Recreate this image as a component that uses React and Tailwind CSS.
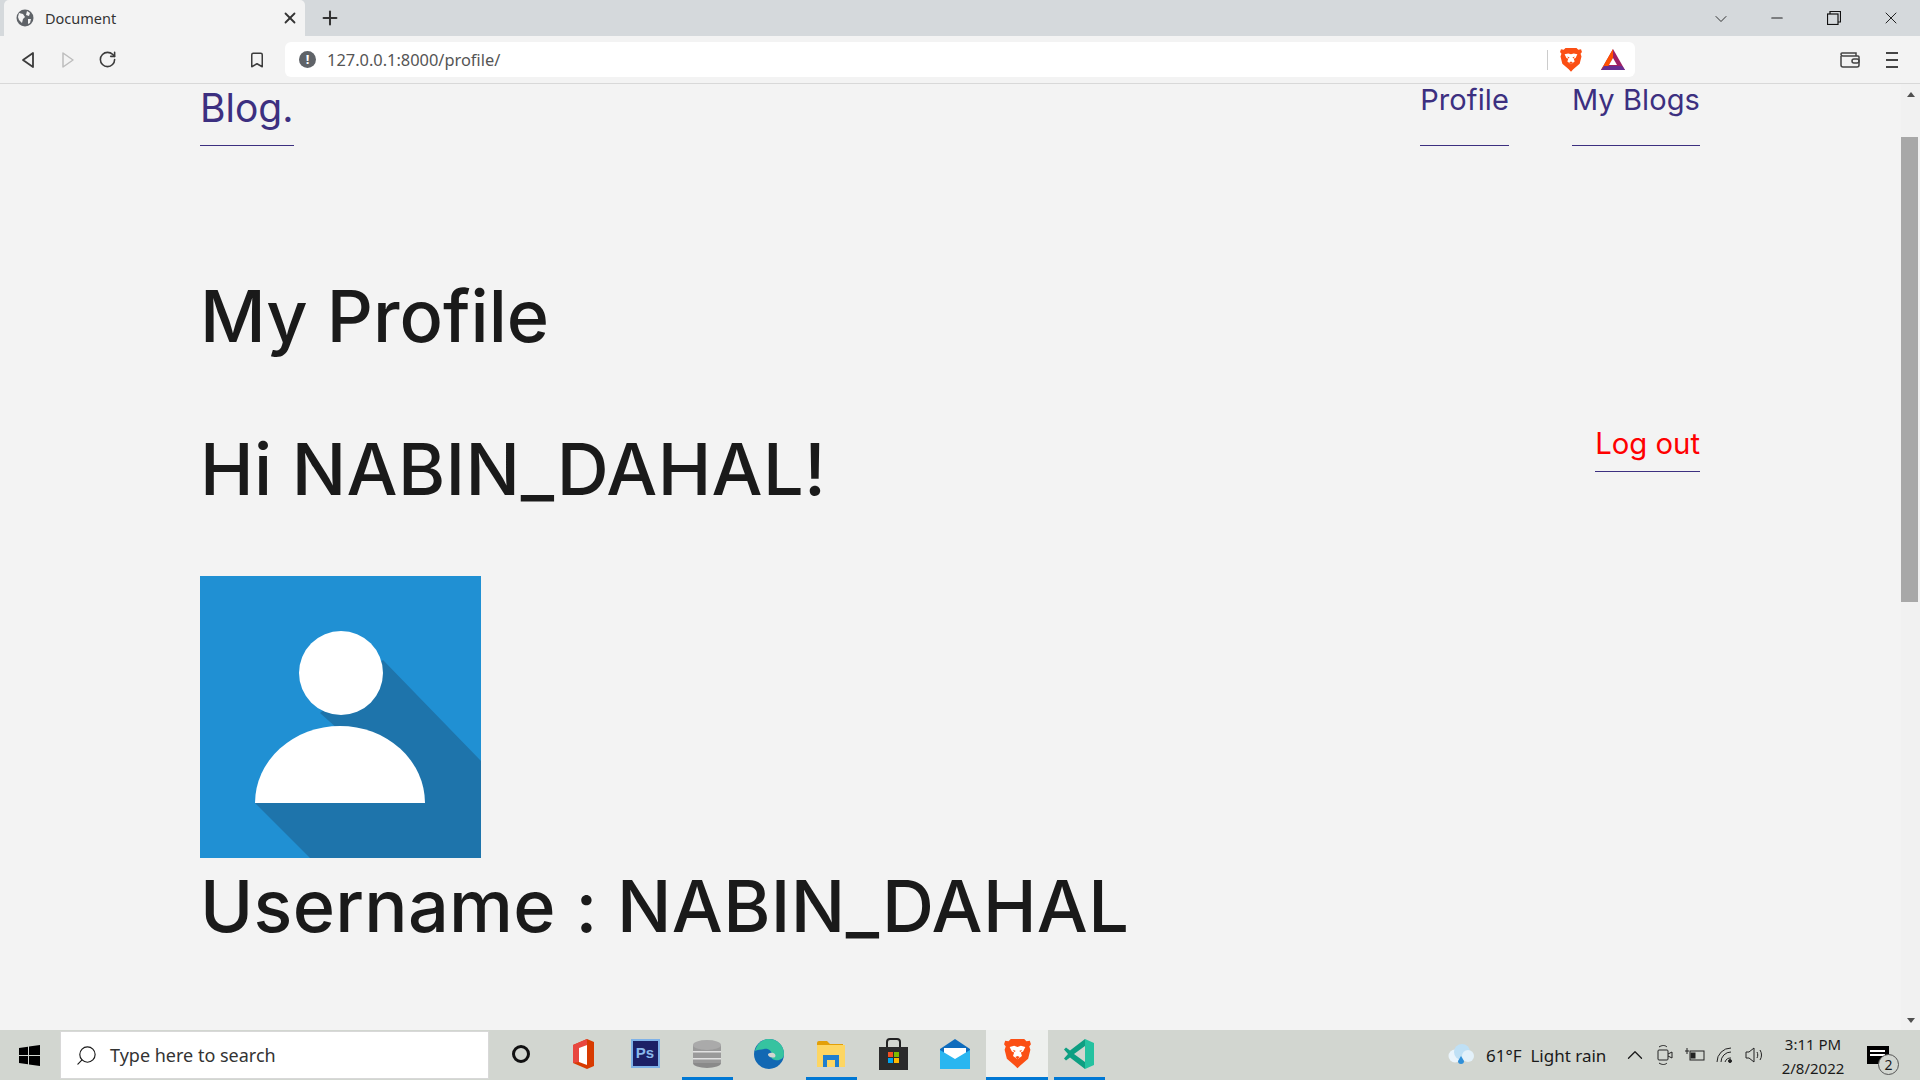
import { Bookmark, ChevronDown, ChevronUp, Minus, Plus, RotateCw, Search, X } from 'lucide-react'

const ui = { fontFamily: '"Noto Sans", "Open Sans", sans-serif' }
const dm = { fontFamily: 'Inter, "Noto Sans", sans-serif' }

function BraveLogo({ size = 24 }) {
  return (
    <svg width={size} height={size * 1.12} viewBox="0 0 24 27">
      <path d="M6 1h12l2 2 3-.5 1 3-1.500 2 1 3-2 8-7 6L12 27l-2.500-2.500-7-6-2-8 1-3L0 5.500l1-3 3 .5z" fill="#fb4f14" />
      <path d="M5 8l4-1 3 1 3-1 4 1-2 4-2 1 1 3-4 3-4-3 1-3-2-1z" fill="#fff" />
      <path d="M8 10.500l2.500 1-1.500 1zM16 10.500l-2.500 1 1.500 1zM10 17l2-1 2 1-2 2z" fill="#fb4f14" />
    </svg>
  )
}

function BatLogo() {
  return (
    <svg width="24" height="22" viewBox="0 0 24 22">
      <path d="M12 0l12 21H0z" fill="#9e1f63" />
      <path d="M12 0L0 21h5L12 9z" fill="#ff5000" />
      <path d="M0 21h24l-3-4H3z" fill="#662d91" />
      <path d="M12 9l4 7H8z" fill="#fff" />
    </svg>
  )
}

function TabStrip() {
  return (
    <div className="h-[36px] bg-[#d5d9dc] flex items-end pl-[4px] text-[#333]">
      <div className="w-[301px] h-[36px] bg-[#f3f3f3] rounded-t-[5px] flex items-center pl-[12px] pr-[6px]">
        <svg width="18" height="18" viewBox="0 0 18 18">
          <circle cx="9" cy="9" r="8.500" fill="#5f6368" />
          <path d="M3 4l4 1 2 3-2 2-1 4-3-3-1-3zM11 2l3 2-1 3-3-1zM12 10l3 0-1 4-2 1z" fill="#f3f3f3" />
        </svg>
        <span className="ml-[11px] mt-[1px] text-[14.500px] text-[#333]" style={ui}>Document</span>
        <X className="ml-auto" size={18} strokeWidth={2.400} />
      </div>
      <div className="w-[50px] h-[36px] flex items-center justify-center">
        <Plus size={22} strokeWidth={2.200} />
      </div>
      <div className="ml-auto h-[36px] flex items-center text-[#222]">
        <ChevronDown size={20} strokeWidth={1.100} className="mt-[2px]" />
        <div className="w-[57px] ml-[17px] flex justify-center"><Minus size={18} strokeWidth={1.400} /></div>
        <div className="w-[57px] flex justify-center">
          <svg width="14" height="14" viewBox="0 0 14 14" fill="none" stroke="#111" strokeWidth="1.200">
            <rect x="0.500" y="3" width="10.500" height="10.500" />
            <path d="M3 3V0.500h10.500V11H11" />
          </svg>
        </div>
        <div className="w-[57px] mr-[1px] flex justify-center"><X size={20} strokeWidth={1.200} /></div>
      </div>
    </div>
  )
}

function Toolbar() {
  return (
    <div className="h-[48px] bg-[#f3f3f3] border-b border-[#d8d8d8] flex items-center text-[#3b3b3b]">
      <div className="w-[285px] h-full flex items-center pl-[21px]">
        <svg width="14" height="18" viewBox="0 0 14 18" fill="none" stroke="#3b3b3b" strokeWidth="1.800"><path d="M12 2v14L2 9z" strokeLinejoin="round" /></svg>
        <svg className="ml-[26px]" width="14" height="18" viewBox="0 0 14 18" fill="none" stroke="#bdbdbd" strokeWidth="1.500"><path d="M2 2v14l10-7z" strokeLinejoin="round" /></svg>
        <RotateCw className="ml-[23px]" size={19} strokeWidth={2} />
        <Bookmark className="ml-[131px]" size={18} strokeWidth={2} />
      </div>
      <div className="w-[1350px] h-[35px] bg-white rounded-[6px] flex items-center pl-[14px]">
        <div className="w-[17px] h-[17px] rounded-full bg-[#5f6368] text-white text-[13px] font-bold leading-[17px] text-center" style={ui}>!</div>
        <span className="ml-[11px] mt-[1px] text-[16.400px] text-[#555]" style={ui}>127.0.0.1:8000/profile/</span>
        <div className="ml-auto w-[1px] h-[20px] bg-[#ccc]" />
        <div className="ml-[12px]"><BraveLogo size={22} /></div>
        <div className="ml-[19px] mr-[10px]"><BatLogo /></div>
      </div>
      <svg className="ml-[205px]" width="20" height="16" viewBox="0 0 20 16" fill="none" stroke="#444" strokeWidth="1.500">
        <path d="M1 4V13a2 2 0 002 2h14a2 2 0 002-2V5a1 1 0 00-1-1H3a2 2 0 01-2-2 1 1 0 011-1h14v3" />
        <rect x="12" y="7" width="7" height="4" rx="2" />
      </svg>
      <div className="ml-[26px] flex flex-col gap-[5px]">
        <div className="w-[12px] h-[2px] bg-[#444]" />
        <div className="w-[12px] h-[2px] bg-[#444]" />
        <div className="w-[12px] h-[2px] bg-[#444]" />
      </div>
    </div>
  )
}

function Avatar() {
  return (
    <svg width="281" height="282" viewBox="0 0 281 282" className="block">
      <rect width="281" height="282" fill="#2090d3" />
      <path d="M120 137L183 84L281 185V282H110L55 227H221z" fill="#1e74ab" />
      <circle cx="141" cy="97" r="42" fill="#fff" />
      <path d="M55 227A85 77 0 01225 227z" fill="#fff" />
    </svg>
  )
}

function NavLink({ children }) {
  return (
    <a className="h-[62px] block border-b border-[#3c2f80] text-[#3c2f80] text-[29px] tracking-[0.1px] leading-[32px]">{children}</a>
  )
}

function Scrollbar() {
  return (
    <div className="w-[19px] bg-[#f1f1f1] flex flex-col items-center">
      <div className="h-[53px] pt-[8px]"><div className="w-0 h-0 border-x-[4px] border-x-transparent border-b-[5px] border-b-[#505050]" /></div>
      <div className="w-[17px] h-[465px] bg-[#a8a8a8] mr-[2px]" />
      <div className="mt-auto h-[12px]"><div className="w-0 h-0 border-x-[4px] border-x-transparent border-t-[5px] border-t-[#505050]" /></div>
    </div>
  )
}

function Cell({ w = 'w-[62px]', bar, active, children }) {
  return (
    <div className={`${w} h-full flex flex-col items-center ${active ? 'bg-[#eef0ee]' : ''}`}>
      <div className="flex-1 flex items-center justify-center">{children}</div>
      <div className={`h-[3px] ${active ? 'w-full' : 'w-[51px]'} ${bar ? 'bg-[#0078d4]' : ''}`} />
    </div>
  )
}

function Tray({ children }) {
  return <div className="w-[30px] flex justify-center">{children}</div>
}

function Taskbar() {
  return (
    <div className="h-[50px] bg-[#d2d6d0] flex items-center text-[#1a1a1a]" style={ui}>
      <div className="w-[60px] flex justify-center pr-[1px]">
        <svg width="21" height="21" viewBox="0 0 21 21" fill="#000">
          <path d="M0 3l9-1.300V10H0zM10 1.500L21 0v10H10zM0 11h9v8.300L0 18zM10 11h11v10L10 19.500z" />
        </svg>
      </div>
      <div className="w-[429px] h-[48px] bg-white flex items-center pl-[14px] border border-[#d8d8d8]">
        <Search size={23} strokeWidth={1.200} className="-scale-x-100" />
        <span className="ml-[12px] text-[18px] text-[#333]">Type here to search</span>
      </div>
      <div className="h-full flex items-center">
        <Cell w="w-[63px]">
          <div className="w-[18px] h-[18px] rounded-full border-[3px] border-[#111]" />
        </Cell>
        <Cell>
          <svg width="22" height="30" viewBox="0 0 22 30">
            <path d="M1 6L15 0l7 3v24l-7 3L1 24z" fill="#d83b01" />
            <path d="M1 6L15 0v6L7 9v14l-6 1z" fill="#e8473f" />
            <path d="M7 9l8-3v20l-8-3z" fill="#fff" />
          </svg>
        </Cell>
        <Cell>
          <div className="w-[29px] h-[29px] bg-[#1c2066] border-[2px] border-[#7fb2e8] text-[#8ab8ec] text-[15px] font-bold flex items-center justify-center" style={{ fontFamily: 'Liberation Sans, sans-serif' }}>Ps</div>
        </Cell>
        <Cell bar>
          <svg width="30" height="30" viewBox="0 0 30 30">
            <ellipse cx="15" cy="24" rx="14" ry="5" fill="#8a8a8a" />
            <rect x="1" y="6" width="28" height="18" fill="#9a9a9a" />
            <rect x="1" y="12" width="28" height="1.500" fill="#e2e2e2" />
            <rect x="1" y="19" width="28" height="1.500" fill="#e2e2e2" />
            <ellipse cx="15" cy="6" rx="14" ry="5" fill="#aaa" />
          </svg>
        </Cell>
        <Cell>
          <svg width="30" height="30" viewBox="0 0 30 30">
            <circle cx="15" cy="15" r="15" fill="#1268b3" />
            <path d="M1 12C3 4 9 0 15 0c9 0 15 7 15 15 0 5-5 7-9 6-4-1-4-3-3-5 0-4-4-7-8-6-3 .5-7 1-9 2z" fill="#36c3a0" />
            <path d="M14 15c4-3 9 0 7 3-1 1-7 1-7-3z" fill="#d2d6d0" />
          </svg>
        </Cell>
        <Cell bar>
          <svg width="28" height="26" viewBox="0 0 28 26">
            <path d="M0 2a2 2 0 012-2h8l3 3h13v4H0z" fill="#e3a008" />
            <path d="M0 4h28v22H0z" fill="#fdd663" />
            <path d="M6 14h16v12h-4v-7h-8v7H6z" fill="#1f7fcf" />
          </svg>
        </Cell>
        <Cell>
          <svg width="29" height="32" viewBox="0 0 29 32">
            <path d="M8 9V4a3 3 0 013-3h7a3 3 0 013 3v5" fill="none" stroke="#222" strokeWidth="2" />
            <rect y="9" width="29" height="23" fill="#2b2b2b" />
            <rect x="9" y="14" width="5" height="5" fill="#f25022" />
            <rect x="15" y="14" width="5" height="5" fill="#7fba00" />
            <rect x="9" y="20" width="5" height="5" fill="#00a4ef" />
            <rect x="15" y="20" width="5" height="5" fill="#ffb900" />
          </svg>
        </Cell>
        <Cell>
          <svg width="30" height="30" viewBox="0 0 30 30">
            <path d="M15 0l15 10v20H0V10z" fill="#0f6cbd" />
            <path d="M4 9h22v6l-11 6L4 15z" fill="#fff" />
            <path d="M0 11l15 9 15-9v19H0z" fill="#29b6f0" />
          </svg>
        </Cell>
        <Cell active bar><BraveLogo size={27} /></Cell>
        <Cell bar>
          <svg width="30" height="30" viewBox="0 0 30 30" fill="#1fb89a">
            <path d="M21 0l9 4v22l-9 4z" fill="#25c2a0" />
            <path d="M21 0v7L10 15l11 8v7L6 18.500l-4 3-2-2 4-4.500-4-4.500 2-2 4 3z" fill="#0e9f82" />
          </svg>
        </Cell>
      </div>
      <div className="ml-auto flex items-center h-full">
        <svg width="26" height="22" viewBox="0 0 26 22">
          <circle cx="7" cy="12" r="6.500" fill="#eaf4fb" />
          <circle cx="14" cy="8" r="8" fill="#bfe0f5" />
          <circle cx="20" cy="12" r="6" fill="#e3f1fa" />
          <path d="M13 12l3 5a3 3 0 11-6 0z" fill="#2f8fd8" />
        </svg>
        <span className="ml-[12px] w-[134px] mt-[2px] text-[17px]">61°F&nbsp; Light rain</span>
        <Tray><ChevronUp size={26} strokeWidth={1.200} /></Tray>
        <Tray>
          <svg width="16" height="20" viewBox="0 0 16 20" fill="none" stroke="#222"><rect x="1" y="5" width="10" height="10" rx="1" /><path d="M11 9l4-2v6l-4-2M2 2c3-2 6-2 8 0M2 18c3 2 6 2 8 0" /></svg>
        </Tray>
        <Tray>
          <svg width="20" height="14" viewBox="0 0 20 14" fill="none" stroke="#222"><rect x="5" y="3" width="14" height="9" /><rect x="6" y="5" width="4" height="5" fill="#222" /><path d="M0 3h4M2 0v6" /></svg>
        </Tray>
        <Tray>
          <svg width="18" height="16" viewBox="0 0 18 16" fill="none" stroke="#222"><path d="M1 15A14 14 0 0115 1M5 15A10 10 0 0115 5M9 15a6 6 0 016-4" /><circle cx="14" cy="14" r="1.500" fill="#222" /></svg>
        </Tray>
        <Tray>
          <svg width="20" height="16" viewBox="0 0 20 16" fill="none" stroke="#222"><path d="M1 5h3l5-4v14l-5-4H1zM12 5c1 2 1 4 0 6M15 3c2 3 2 7 0 10" /></svg>
        </Tray>
        <div className="ml-[3px] w-[80px] flex flex-col items-center text-[15px] leading-[24px] mt-[1px]">
          <span>3:11 PM</span>
          <span>2/8/2022</span>
        </div>
        <div className="w-[50px] flex justify-center">
          <div className="relative w-[22px] h-[18px] bg-black">
            <div className="absolute left-[3px] top-[4px] w-[15px] h-[2px] bg-white" />
            <div className="absolute left-[3px] top-[8px] w-[15px] h-[2px] bg-white" />
            <div className="absolute -right-[10px] -bottom-[11px] w-[21px] h-[21px] rounded-full bg-[#d2d6d0] border border-[#555] text-[14px] leading-[19px] text-center">2</div>
          </div>
        </div>
        <div className="w-[17px]" />
      </div>
    </div>
  )
}

export default function App() {
  return (
    <div className="h-screen w-full flex flex-col overflow-hidden bg-[#f3f3f3]">
      <TabStrip />
      <Toolbar />
      <div className="flex-1 flex min-h-0">
        <main className="flex-1 pl-[200px] pr-[201px] text-[#1a1a1a]" style={dm}>
          <header className="flex items-start">
            <a className="h-[62px] block border-b border-[#3c2f80] text-[#3c2f80] text-[39px] leading-[48px]">Blog.</a>
            <nav className="ml-auto flex gap-[63px]">
              <NavLink>Profile</NavLink>
              <NavLink>My Blogs</NavLink>
            </nav>
          </header>
          <h1 className="mt-[125px] text-[72px] font-medium leading-[90px]">My Profile</h1>
          <div className="mt-[63px] flex items-start justify-between">
            <h2 className="text-[72px] font-medium tracking-[0.3px] leading-[90px]">Hi NABIN_DAHAL!</h2>
            <a className="mt-[2px] h-[46px] border-b border-[#3c2f80] text-[#ff0000] text-[29.300px] leading-[36px]">Log out</a>
          </div>
          <div className="mt-[62px]"><Avatar /></div>
          <p className="text-[72px] font-medium tracking-[0.3px] leading-[96px]">Username : NABIN_DAHAL</p>
        </main>
        <Scrollbar />
      </div>
      <Taskbar />
    </div>
  )
}
